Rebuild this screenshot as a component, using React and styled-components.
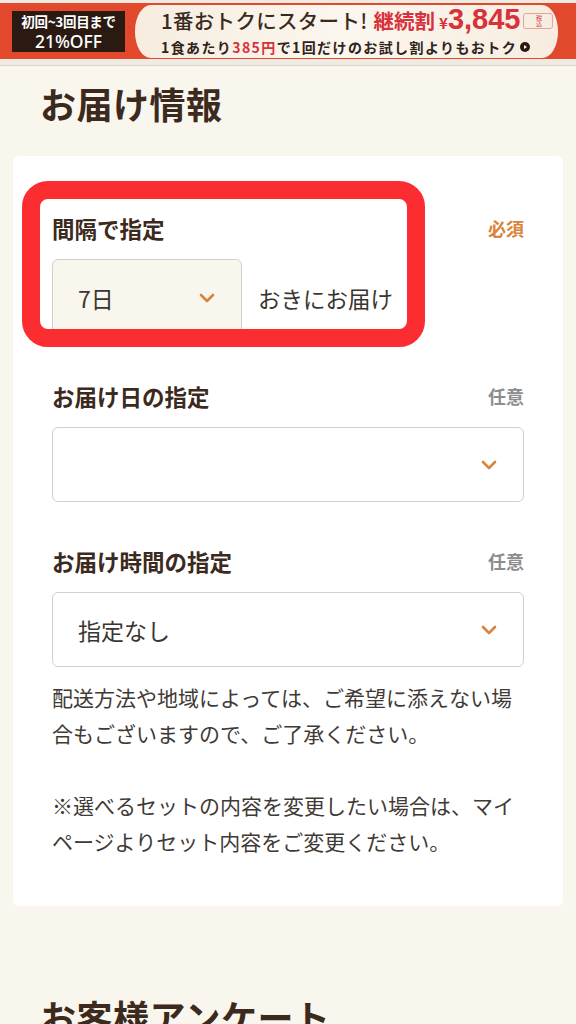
import React from "react";
import styled, { createGlobalStyle } from "styled-components";

const GlobalStyle = createGlobalStyle`
  html, body {
    margin: 0;
    padding: 0;
    background: #f9f6ed;
  }
  body {
    font-family: "Noto Sans CJK JP", "Noto Sans", sans-serif;
    color: #3d2b1f;
  }
  * { box-sizing: border-box; }
`;

const BannerWrap = styled.div`
  background: #efebe3;
  padding-top: 3px;
  height: 66px;
  border-bottom: 1px solid #d9d5cd;
`;

const BannerBody = styled.div`
  display: flex;
  align-items: center;
  height: 56px;
  background: #e2482c;
`;

const OfferBox = styled.div`
  margin-left: 12px;
  width: 113px;
  height: 41px;
  background: #2a1a11;
  color: #fff;
  display: flex;
  flex-direction: column;
  align-items: center;
  justify-content: center;
  font-weight: 700;
`;

const OfferSmall = styled.span`
  font-size: 13.5px;
  line-height: 20px;
  letter-spacing: -0.3px;
`;

const OfferBig = styled.span`
  font-family: "Noto Sans", sans-serif;
  font-size: 17.5px;
  line-height: 20px;
  font-weight: 500;
`;

const Ticket = styled.div`
  margin-left: 10px;
  margin-right: 18px;
  flex: 1;
  height: 53px;
  background: linear-gradient(90deg, #f6ede0 0%, #fbf6ee 50%, #f6ede0 100%);
  border-radius: 16px / 26px;
  display: flex;
  flex-direction: column;
  justify-content: center;
  padding-left: 26px;
`;

const TicketLine = styled.div`
  display: flex;
  align-items: baseline;
  white-space: nowrap;
  line-height: ${(p) => p.$lh};
`;

const Catch = styled.span`
  font-size: 20.5px;
  font-weight: 500;
  color: #3a2a1e;
  letter-spacing: 0.3px;
`;

const Red = styled.span`
  color: #d8313a;
  font-weight: 700;
  font-size: ${(p) => p.$size};
  margin-left: ${(p) => p.$ml || "0"};
  font-family: ${(p) => (p.$latin ? '"Liberation Sans", sans-serif' : "inherit")};
`;

const TaxNote = styled.span`
  writing-mode: vertical-rl;
  font-size: 6px;
  color: #d8313a;
  border: 1px solid #e9a0a0;
  border-radius: 3px;
  margin-left: 3px;
  padding: 1px 0;
`;

const SubLine = styled.span`
  font-size: 14px;
  font-weight: 700;
  color: #2f231a;
  letter-spacing: 1.4px;
`;

const PlayIcon = styled.svg`
  width: 10px;
  height: 10px;
  margin-left: 3px;
  align-self: center;
`;

const Page = styled.main`
  padding: 0 13px;
`;

const Heading = styled.h2`
  margin: ${(p) => p.$mt} 0 0 27px;
  font-size: 36px;
  line-height: 50px;
  font-weight: 700;
  color: #3b2a1d;
  letter-spacing: 0.5px;
`;

const Card = styled.section`
  position: relative;
  margin-top: 28px;
  background: #fff;
  border-radius: 6px;
  padding: 55px 39px 47px;
`;

const Field = styled.div`
  & + & {
    margin-top: 42px;
  }
`;

const LabelRow = styled.div`
  display: flex;
  justify-content: space-between;
  align-items: center;
  height: 34px;
`;

const Label = styled.span`
  font-size: 22.5px;
  font-weight: 700;
  color: #3b2a1d;
`;

const Badge = styled.span`
  font-size: 18px;
  font-weight: 700;
  color: ${(p) => (p.$required ? "#d8843a" : "#8d8d8d")};
`;

const IntervalRow = styled.div`
  display: flex;
  align-items: center;
  gap: 16px;
  margin-top: 14px;
`;

const SelectBox = styled.div`
  display: flex;
  align-items: center;
  justify-content: space-between;
  width: ${(p) => p.$width || "100%"};
  height: ${(p) => p.$height || "75px"};
  margin-top: ${(p) => p.$mt || "0"};
  padding: 0 26px 0 25px;
  background: ${(p) => (p.$cream ? "#f9f6ee" : "#fff")};
  border: 1.5px solid #d3d0ca;
  border-radius: 6px;
  font-size: 23px;
  color: #3a3531;
`;

const Chevron = styled.svg`
  width: 16px;
  height: 10px;
  flex: none;
`;

const AfterText = styled.span`
  font-size: 22.5px;
  color: #3a3531;
`;

const Notes = styled.div`
  margin-top: 12px;
`;

const Note = styled.p`
  margin: 0;
  font-size: 21px;
  line-height: 36px;
  color: #3f3a36;
  & + & {
    margin-top: 36px;
  }
`;

const Highlight = styled.div`
  position: absolute;
  left: 9px;
  top: 25px;
  width: 403px;
  height: 166px;
  border: 18px solid #fc2d31;
  border-radius: 26px;
  pointer-events: none;
`;

const ChevronIcon = () => (
  <Chevron viewBox="0 0 16 10">
    <path d="M2 2 L8 8 L14 2" fill="none" stroke="#d9843a" strokeWidth="2.6" strokeLinecap="round" strokeLinejoin="round" />
  </Chevron>
);

export default function App() {
  return (
    <>
      <GlobalStyle />
      <BannerWrap>
        <BannerBody>
          <OfferBox>
            <OfferSmall>初回~3回目まで</OfferSmall>
            <OfferBig>21%OFF</OfferBig>
          </OfferBox>
          <Ticket>
            <TicketLine $lh="28px">
              <Catch>1番おトクにスタート!</Catch>
              <Red $size="20.5px" $ml="6px">継続割</Red>
              <Red $size="15px" $ml="4px">¥</Red>
              <Red $size="29px" $latin>3,845</Red>
              <TaxNote>税込</TaxNote>
            </TicketLine>
            <TicketLine $lh="20px">
              <SubLine>
                1食あたり<Red $size="14px">385円</Red>で1回だけのお試し割よりもおトク
              </SubLine>
              <PlayIcon viewBox="0 0 10 10">
                <circle cx="5" cy="5" r="5" fill="#2a1a11" />
                <path d="M4 3 L7 5 L4 7 Z" fill="#fff" />
              </PlayIcon>
            </TicketLine>
          </Ticket>
        </BannerBody>
      </BannerWrap>

      <Page>
        <Heading $mt="12px">お届け情報</Heading>
        <Card>
          <Field>
            <LabelRow>
              <Label>間隔で指定</Label>
              <Badge $required>必須</Badge>
            </LabelRow>
            <IntervalRow>
              <SelectBox $width="190px" $height="78px" $cream>
                <span>7日</span>
                <ChevronIcon />
              </SelectBox>
              <AfterText>おきにお届け</AfterText>
            </IntervalRow>
          </Field>
          <Field>
            <LabelRow>
              <Label>お届け日の指定</Label>
              <Badge>任意</Badge>
            </LabelRow>
            <SelectBox $mt="14px">
              <span />
              <ChevronIcon />
            </SelectBox>
          </Field>
          <Field>
            <LabelRow>
              <Label>お届け時間の指定</Label>
              <Badge>任意</Badge>
            </LabelRow>
            <SelectBox $mt="14px">
              <span>指定なし</span>
              <ChevronIcon />
            </SelectBox>
          </Field>
          <Notes>
            <Note>配送方法や地域によっては、ご希望に添えない場合もございますので、ご了承ください。</Note>
            <Note>※選べるセットの内容を変更したい場合は、マイページよりセット内容をご変更ください。</Note>
          </Notes>
          <Highlight />
        </Card>
        <Heading $mt="85px">お客様アンケート</Heading>
      </Page>
    </>
  );
}
